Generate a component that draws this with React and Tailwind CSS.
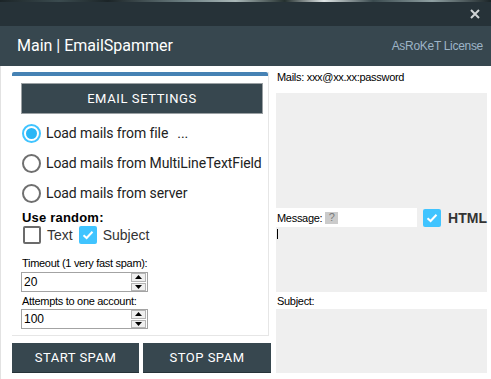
import React from "react";

function Radio({ checked, label, extra }) {
  return (
    <div className="h-[30px] flex items-center whitespace-nowrap">
      <div className="w-[23px] flex items-center justify-start pl-[1px]">
        {checked ? (
          <div className="w-[19px] h-[19px] rounded-full border-2 border-[#40C4FF] flex items-center justify-center">
            <div className="w-[11px] h-[11px] rounded-full bg-[#29B6F6]" />
          </div>
        ) : (
          <div className="w-[19px] h-[19px] rounded-full border-2 border-[#6f6f6f]" />
        )}
      </div>
      <span className="font-['Roboto'] text-[14px] tracking-[-0.1px] text-[#222] leading-none ml-[2px]">{label}</span>
      {extra && <span className="font-['Roboto'] text-[14px] text-[#222] leading-none ml-[9px]">{extra}</span>}
    </div>
  );
}

function Check({ checked }) {
  if (checked) {
    return (
      <div className="w-[18px] h-[18px] rounded-[2px] bg-[#40C4FF] flex items-center justify-center">
        <svg width="12" height="10" viewBox="0 0 12 10">
          <path d="M1.5 5.2 L4.6 8 L10.5 1.8" stroke="#fff" strokeWidth="2" fill="none" />
        </svg>
      </div>
    );
  }
  return <div className="w-[18px] h-[18px] rounded-[2px] border-2 border-[#6b6b6b]" />;
}

function Spinner({ value }) {
  return (
    <div className="w-[127px] h-[20px] border border-[#a3a3a3] flex items-center bg-white">
      <span className="flex-1 pl-[2px] font-['Liberation_Sans'] text-[12px] text-black leading-none">{value}</span>
      <div className="w-[15px] h-[18px] flex flex-col gap-[1px] mr-[1px]">
        <div className="flex-1 border border-[#b5b5b5] bg-[#f0f0f0] flex items-center justify-center">
          <svg width="7" height="4" viewBox="0 0 7 4"><path d="M0 4 L3.5 0 L7 4 Z" fill="#000" /></svg>
        </div>
        <div className="flex-1 border border-[#b5b5b5] bg-[#f0f0f0] flex items-center justify-center">
          <svg width="7" height="4" viewBox="0 0 7 4"><path d="M0 0 L3.5 4 L7 0 Z" fill="#000" /></svg>
        </div>
      </div>
    </div>
  );
}

export default function App() {
  const small = "font-['Liberation_Sans'] text-[11px] tracking-[-0.3px] text-black leading-[14px]";
  return (
    <div className="w-[491px] h-[379px] overflow-hidden bg-white flex flex-col">
      <div className="h-[2px] bg-[linear-gradient(90deg,#1b2427_0%,#3b4b4f_12%,#1b2427_22%,#6f8285_38%,#aab8b8_48%,#24302f_58%,#e0e6e6_66%,#3a4a4e_76%,#8fa0a2_88%,#1b2427_100%)]" />
      <div className="h-[24px] bg-[#263238] flex items-center justify-end pr-[11px]">
        <svg width="10" height="10" viewBox="0 0 10 10">
          <path d="M1 1 L9 9 M9 1 L1 9" stroke="#d0d4d6" strokeWidth="2" />
        </svg>
      </div>
      <div className="h-[40px] bg-[#37474F] flex items-center justify-between pl-[17px] pr-[8px]">
        <span className="font-['Roboto'] text-[16px] text-white leading-none">Main | EmailSpammer</span>
        <span className="font-['Liberation_Sans'] text-[12px] tracking-[-0.3px] text-[#9db4c7] leading-none">AsRoKeT License</span>
      </div>
      <div className="flex flex-1">
        <div className="w-[1px] bg-[#e2e2e2]" />
        <div className="w-[270px] pl-[11px] pt-[6px] flex flex-col">
          <div className="w-[257px] h-[264px] flex flex-col bg-white border-r border-b border-[#e6e6e6]">
            <div className="h-[4px] bg-[#4682B4] rounded-t-[2px]" />
            <div className="pl-[9px] pr-[5px] pt-[7px] flex flex-col">
              <div className="h-[31px] bg-[#37474F] border border-[#9aa0a3] flex items-center justify-center">
                <span className="font-['Roboto'] text-[13px] tracking-[0.6px] text-white leading-none">EMAIL SETTINGS</span>
              </div>
              <div className="mt-[4px] flex flex-col">
                <Radio checked label="Load mails from file" extra="..." />
                <Radio label="Load mails from MultiLineTextField" />
                <Radio label="Load mails from server" />
              </div>
              <div className="mt-[2px] h-[15px] pl-[1px] flex items-center font-['Liberation_Sans'] font-bold text-[13px] tracking-[0.2px] text-black leading-none">
                Use random:
              </div>
              <div className="mt-[1px] h-[18px] flex items-center pl-[2px]">
                <Check />
                <span className="ml-[6px] font-['Liberation_Sans'] text-[14px] text-[#333] leading-none">Text</span>
                <div className="ml-[6px]"><Check checked /></div>
                <span className="ml-[6px] font-['Liberation_Sans'] text-[14px] text-[#333] leading-none">Subject</span>
              </div>
              <div className={"mt-[12px] h-[14px] pl-[1px] " + small}>Timeout (1 very fast spam):</div>
              <div className="mt-[2px]"><Spinner value="20" /></div>
              <div className={"mt-[2px] h-[14px] pl-[1px] " + small}>Attempts to one account:</div>
              <div className="mt-[1px]"><Spinner value="100" /></div>
            </div>
          </div>
          <div className="mt-[7px] flex gap-[4px]">
            <div className="w-[127px] h-[30px] bg-[#37474F] border-b border-[#263238] flex items-center justify-center">
              <span className="font-['Roboto'] text-[13px] tracking-[0.5px] text-white leading-none">START SPAM</span>
            </div>
            <div className="w-[128px] h-[30px] bg-[#37474F] border-b border-[#263238] flex items-center justify-center">
              <span className="font-['Roboto'] text-[13px] tracking-[0.5px] text-white leading-none">STOP SPAM</span>
            </div>
          </div>
        </div>
        <div className="ml-[5px] w-[211px] flex flex-col">
          <div className={"pt-[4px] h-[27px] pl-[1px] " + small}>Mails: xxx@xx.xx:password</div>
          <div className="h-[115px] bg-[#efefef]" />
          <div className="h-[19px] flex bg-[#efefef]">
            <div className="w-[143px] bg-white flex items-center pl-[1px]">
              <span className={small}>Message:</span>
              <span className="ml-[3px] w-[13px] h-[12px] bg-[#cbcbcb] flex items-center justify-center font-['Liberation_Sans'] text-[11px] text-[#7a7a7a] leading-none">?</span>
            </div>
            <div className="ml-[6px] flex items-center">
              <Check checked />
              <span className="ml-[7px] font-['Liberation_Sans'] font-bold text-[14px] text-[#333] leading-none whitespace-nowrap">HTML</span>
            </div>
          </div>
          <div className="h-[65px] bg-[#efefef] pt-[2px] pl-[1px]">
            <div className="w-[1px] h-[10px] bg-black" />
          </div>
          <div className={"h-[17px] flex items-center pl-[1px] " + small}>Subject:</div>
          <div className="h-[64px] bg-[#efefef]" />
        </div>
      </div>
    </div>
  );
}
